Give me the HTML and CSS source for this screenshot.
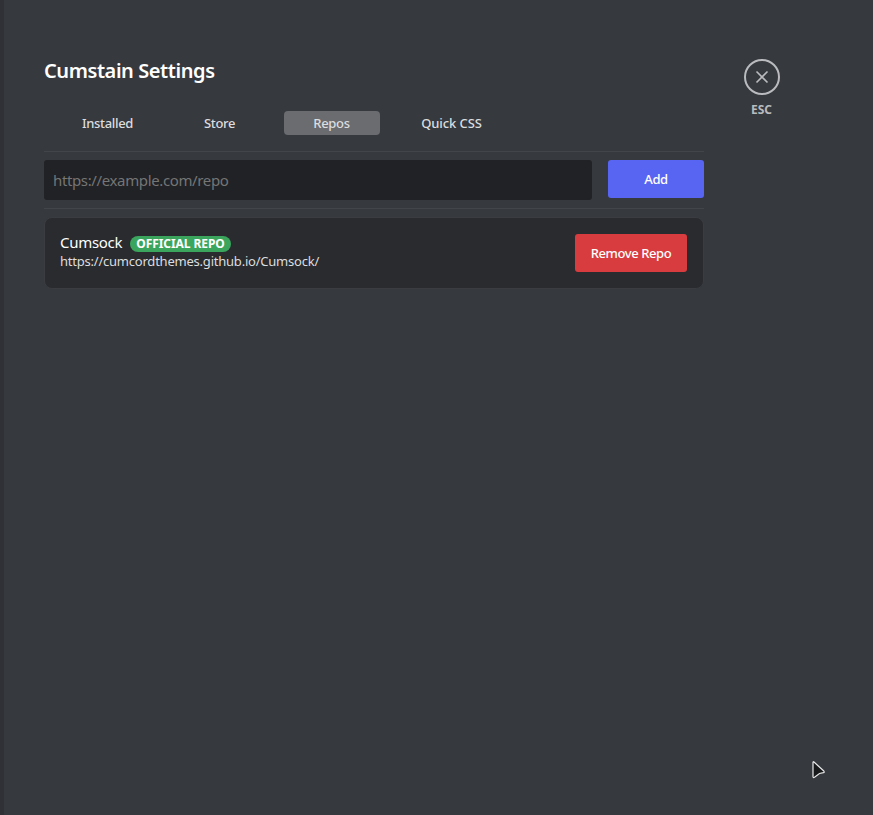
FILE: index.html
```html
<!DOCTYPE html>
<html lang="en">
<head>
<meta charset="utf-8">
<title>Settings</title>
<link rel="stylesheet" href="styles.css">
</head>
<body>
<div class="app">
  <main class="content">
    <h1 class="title">Cumstain Settings</h1>
    <nav class="tabs">
      <button class="tab">Installed</button>
      <button class="tab">Store</button>
      <button class="tab active">Repos</button>
      <button class="tab wide">Quick CSS</button>
    </nav>
    <form class="add-row">
      <input class="field" type="text" placeholder="https://example.com/repo">
      <button class="button add" type="button">Add</button>
    </form>
    <article class="card">
      <div class="info">
        <div class="heading"><span class="name">Cumsock</span><span class="badge">OFFICIAL REPO</span></div>
        <div class="url">https://cumcordthemes.github.io/Cumsock/</div>
      </div>
      <button class="button remove">Remove Repo</button>
    </article>
  </main>
  <aside class="close">
    <svg width="36" height="36" viewBox="0 0 36 36" fill="none" stroke="#b9bbbe">
      <circle cx="18" cy="18" r="17" stroke-width="2"/>
      <path d="M12.5 12.5l11 11M23.5 12.5l-11 11" stroke-width="1.6"/>
    </svg>
    <span class="esc">ESC</span>
  </aside>
</div>
<svg class="cursor" width="16" height="20" viewBox="0 0 16 20">
  <path d="M2 2.5Q2 1.2 3 2L12.8 11Q13.8 12.3 12.4 12.7L8.5 13.5L3.5 17.3Q2 18 2 16.8Z" fill="#18191b" stroke="#e8e8e8" stroke-width="1.2"/>
</svg>
</body>
</html>
```
FILE: styles.css
```css
* { box-sizing: border-box; }
body {
  margin: 0;
  background: #36393e;
  color: #dcddde;
  font-family: "Noto Sans", "Open Sans", sans-serif;
}
button, input { font: inherit; border: 0; padding: 0; color: inherit; }
.app {
  display: flex;
  height: 815px;
  border-left: 4px solid #2f3136;
  padding: 59px 0 0 40px;
}
.content { width: 660px; }
.title {
  margin: 0;
  height: 24px;
  color: #fff;
  font-size: 20px;
  line-height: 24px;
  font-weight: 600;
  letter-spacing: -0.42px;
}
.tabs {
  display: flex;
  gap: 16px;
  height: 69px;
  padding: 28px 0 0 16px;
  border-bottom: 1px solid #42454a;
}
.tab {
  width: 96px;
  height: 24px;
  padding-right: 1px;
  border-radius: 4px;
  background: none;
  font-size: 13px;
  font-weight: 500;
  line-height: 24px;
  letter-spacing: -0.33px;
}
.tab.active { background: #6b6c70; }
.tab.wide { width: 112px; letter-spacing: -0.1px; }
.add-row {
  display: flex;
  gap: 16px;
  height: 57px;
  padding-top: 8px;
  border-bottom: 1px solid #42454a;
}
.field {
  width: 548px;
  height: 40px;
  border-radius: 3px;
  padding: 0 9px 1px;
  background: #202225;
  font-size: 15px;
  letter-spacing: -0.37px;
}
.field::placeholder { color: #757575; opacity: 1; }
.button {
  height: 38px;
  border-radius: 3px;
  color: #fff;
  font-size: 13px;
  font-weight: 500;
  letter-spacing: -0.4px;
}
.add { width: 96px; background: #5865f2; }
.remove { width: 112px; background: #d83c3e; }
.card {
  display: flex;
  justify-content: space-between;
  height: 72px;
  margin-top: 8px;
  padding: 16px 16px 0 15px;
  border: 1px solid #3a3c41;
  border-radius: 8px;
  background: #292b2f;
}
.heading { display: flex; align-items: center; height: 18px; }
.name { width: 70px; margin-top: -2px; color: #fff; font-size: 15px; line-height: 18px; letter-spacing: -0.3px; }
.badge {
  width: 101px;
  height: 16px;
  margin-top: 2px;
  border-radius: 8px;
  background: #3ba55d;
  color: #fff;
  text-align: center;
  font-size: 12px;
  line-height: 16px;
  font-weight: 700;
  letter-spacing: -0.08px;
}
.url { font-size: 13px; line-height: 18px; letter-spacing: -0.22px; }
.close {
  display: flex;
  flex-direction: column;
  align-items: center;
  width: 36px;
  margin-left: 40px;
}
.esc {
  margin: 6px 1px 0 0;
  color: #b9bbbe;
  font-size: 12px;
  line-height: 18px;
  font-weight: 700;
  letter-spacing: 0;
}
.cursor { position: absolute; left: 811px; top: 760px; }
```
